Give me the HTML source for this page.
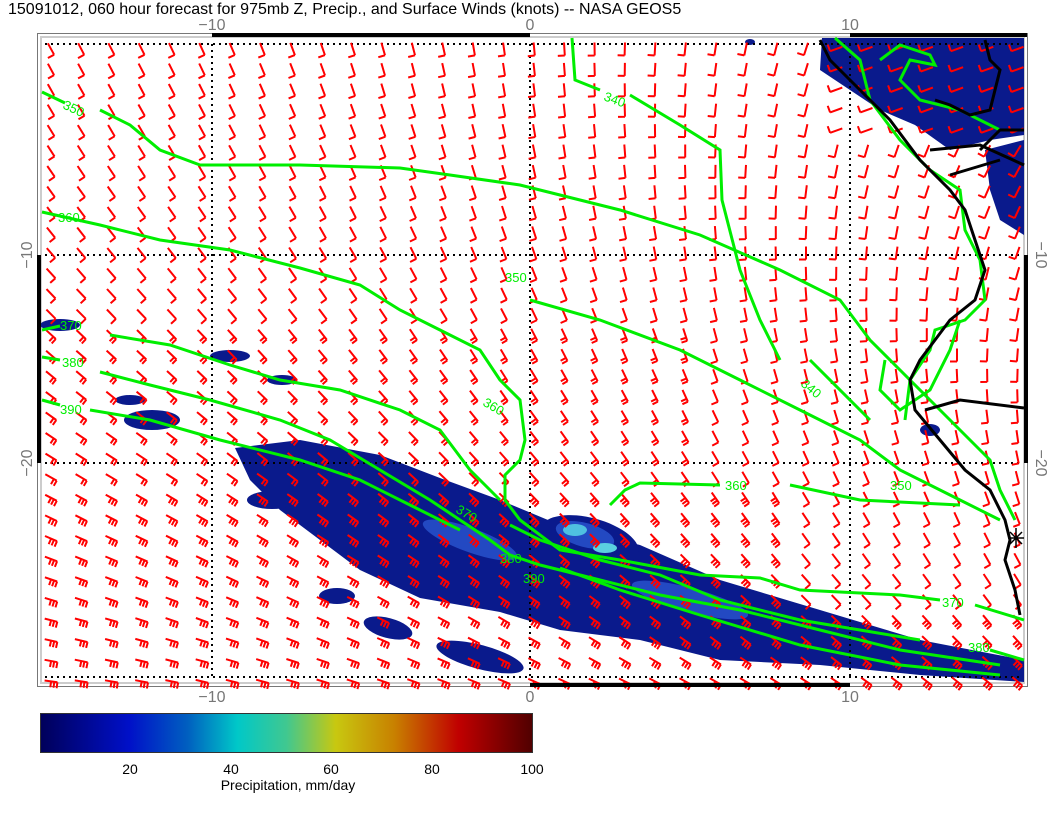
<!DOCTYPE html>
<html><head><meta charset="utf-8"><style>
html,body{margin:0;padding:0;background:#fff;width:1056px;height:816px;overflow:hidden}
svg{display:block}
text{font-family:"Liberation Sans",sans-serif}
</style></head><body>
<svg id="s" width="1056" height="816" viewBox="0 0 1056 816" xmlns="http://www.w3.org/2000/svg">
<text x="8" y="14" font-size="16" fill="#000">15091012, 060 hour forecast for 975mb Z, Precip., and Surface Winds (knots) -- NASA GEOS5</text>
<rect x="37.5" y="33.5" width="990" height="653" fill="#fff" stroke="#777" stroke-width="1"/>
<rect x="41" y="37" width="983" height="646" fill="none" stroke="#ccc" stroke-width="2"/>
<g fill="#0a1a8c">
<path d="M822 38 L1024 38 L1024 135 L990 140 L950 150 L915 125 L880 110 L850 90 L820 70 Z"/>
<path d="M985 150 L1024 140 L1024 235 L1000 220 L990 190 Z"/>
<path d="M235 448 L300 440 L380 455 L440 478 L500 500 L560 525 L640 545 L720 580 L820 610 L920 640 L1024 660 L1024 682 L920 675 L820 665 L720 660 L640 640 L560 630 L500 612 L420 598 L360 570 L320 540 L280 510 L250 480 Z"/>
<ellipse cx="590" cy="540" rx="50" ry="22" transform="rotate(15 590 540)"/>
<ellipse cx="480" cy="657" rx="45" ry="12" transform="rotate(15 480 657)"/>
<ellipse cx="388" cy="628" rx="25" ry="10" transform="rotate(15 388 628)"/>
<ellipse cx="337" cy="596" rx="18" ry="8"/>
<ellipse cx="272" cy="500" rx="25" ry="9"/>
<ellipse cx="230" cy="356" rx="20" ry="6"/>
<ellipse cx="282" cy="380" rx="15" ry="5"/>
<ellipse cx="152" cy="420" rx="28" ry="10"/>
<ellipse cx="130" cy="400" rx="15" ry="5"/>
<ellipse cx="60" cy="325" rx="20" ry="6"/>
<ellipse cx="750" cy="42" rx="5" ry="3"/>
<ellipse cx="930" cy="430" rx="10" ry="6"/>
</g>
<g fill="#2a55d0" opacity=".8">
<ellipse cx="585" cy="535" rx="30" ry="12" transform="rotate(15 585 535)"/>
<ellipse cx="690" cy="600" rx="60" ry="12" transform="rotate(15 690 600)"/>
<ellipse cx="470" cy="540" rx="50" ry="12" transform="rotate(20 470 540)"/>
</g>
<ellipse cx="575" cy="530" rx="12" ry="6" fill="#4fc0e0"/>
<ellipse cx="605" cy="548" rx="12" ry="5" fill="#5ad0e0"/>
<g stroke="#000" stroke-width="2" stroke-dasharray="2 4" fill="none">
<line x1="212" y1="44" x2="212" y2="677"/><line x1="530" y1="44" x2="530" y2="677"/><line x1="850" y1="44" x2="850" y2="677"/>
<line x1="45" y1="44" x2="1020" y2="44"/><line x1="45" y1="255" x2="1020" y2="255"/><line x1="45" y1="463" x2="1020" y2="463"/><line x1="45" y1="677" x2="1020" y2="677"/>
</g>
<g id="barbs" stroke="#f00" stroke-width="2" fill="none" stroke-linecap="butt"></g>
<g stroke="#0e0" stroke-width="3" fill="none">
<path d="M42 92 L65 103 M100 110 L130 125 L160 150 L200 165 L300 165 L400 168 L450 175 L520 185 L580 200 L620 210 L700 235 L780 270 L840 300 L870 340 L900 370 L930 400 L990 460 L1000 490 L1015 520"/>
<path d="M42 212 L100 225 L160 240 L230 250 L300 268 L360 285 L400 310 L440 330 L480 350 L500 380 L520 400 L525 440 L520 460 L505 475 L505 500 L520 520 L560 550 L620 560 L700 575 L760 578 L800 590 L900 595 L940 600 M975 605 L1024 620"/>
<path d="M42 330 L60 326 M110 335 L170 345 L230 365 L280 380 L340 390 L400 410 L440 430 L470 470 L500 500 M510 525 L540 540 L600 560 L660 575 L720 600 L800 620 L860 630 L920 640 M990 650 L1024 660"/>
<path d="M42 357 L60 360 M100 372 L150 385 L210 400 L280 420 L330 440 L380 470 L430 500 L460 520 L490 540 L510 555 L540 565 L600 580 L660 595 L740 610 L820 630 L900 650 L1000 665"/>
<path d="M42 400 L60 405 M90 410 L150 420 L220 440 L300 460 L360 480 L410 505 L460 530 M560 568 L620 590 L700 615 L800 645 L900 665 L1000 675"/>
<path d="M530 300 L600 320 L680 350 L740 380 L800 410 L860 440 L900 470 L960 500 L1000 520 M810 360 L870 420"/>
<path d="M572 38 L575 80 L600 90 M630 95 L680 125 L720 150 L722 200 L740 270 L760 320 L780 360"/>
<path d="M610 505 L625 490 L640 483 L720 485 M790 485 L860 500 L960 505"/>
<path d="M835 38 L860 60 L870 100 L900 140 L930 170 L960 190 L965 230 L980 260 L985 300 L965 320 L935 330 L930 350 L910 380 L905 420"/>
<path d="M880 60 L900 45 L930 55 L935 65 L910 60 L900 80 L920 100 L960 110 L1000 130"/>
<path d="M885 360 L880 390 L900 410 L930 390 L950 350 L960 320"/>
</g>
<g fill="#0e0" font-size="13">
<text x="62" y="108" transform="rotate(25 62 108)">350</text>
<text x="58" y="222">360</text>
<text x="60" y="330">370</text>
<text x="62" y="367">380</text>
<text x="60" y="414">390</text>
<text x="505" y="282">350</text>
<text x="482" y="405" transform="rotate(30 482 405)">360</text>
<text x="800" y="385" transform="rotate(40 800 385)">340</text>
<text x="603" y="100" transform="rotate(20 603 100)">340</text>
<text x="725" y="490">360</text>
<text x="890" y="490">350</text>
<text x="942" y="607">370</text>
<text x="968" y="652">380</text>
<text x="455" y="512" transform="rotate(30 455 512)">370</text>
<text x="500" y="563">380</text>
<text x="523" y="583">390</text>
</g>
<g stroke="#000" stroke-width="3" fill="none">
<path d="M820 40 L830 60 L860 90 L890 120 L920 160 L950 190 L965 210 L975 240 L985 270 L975 300 L950 320 L935 340 L920 360 L910 380 L915 410 L940 440 L965 470 L990 490 L1005 520 L1010 540 L1005 560 L1015 590 L1020 615"/>
<path d="M930 150 L980 145 L1024 165 M950 175 L1000 160 M925 410 L960 400 L1024 408 M980 150 L1000 130 L1024 130"/>
<path d="M985 40 L990 60 L1000 70 L995 90 L990 110 L970 115 L950 105 L935 100"/>
</g>
<g stroke="#000" stroke-width="1.5"><path d="M1008 538 L1024 538 M1016 528 L1016 548 M1010 532 L1022 544 M1022 532 L1010 544"/></g>
<g fill="#000">
<rect x="212" y="33" width="318" height="4"/><rect x="850" y="33" width="177" height="4"/>
<rect x="530" y="683" width="320" height="4"/>
<rect x="37" y="255" width="4" height="208"/><rect x="1024" y="255" width="4" height="208"/>
</g>
<g fill="#777" font-size="16" text-anchor="middle">
<text x="212" y="30">−10</text><text x="530" y="30">0</text><text x="850" y="30">10</text>
<text x="212" y="702">−10</text><text x="530" y="702">0</text><text x="850" y="702">10</text>
<text transform="translate(32 255) rotate(-90)">−10</text><text transform="translate(32 463) rotate(-90)">−20</text>
<text transform="translate(1036 255) rotate(90)">−10</text><text transform="translate(1036 463) rotate(90)">−20</text>
</g>
<defs><linearGradient id="cb" x1="0" x2="1">
<stop offset="0" stop-color="#00005a"/><stop offset=".18" stop-color="#0010c8"/><stop offset=".3" stop-color="#0060c0"/><stop offset=".4" stop-color="#00c8c8"/><stop offset=".5" stop-color="#40c890"/><stop offset=".6" stop-color="#c8c810"/><stop offset=".72" stop-color="#c88000"/><stop offset=".85" stop-color="#c00000"/><stop offset="1" stop-color="#500000"/>
</linearGradient></defs>
<rect x="40.5" y="713.5" width="492" height="39" fill="url(#cb)" stroke="#333"/>
<g fill="#000" font-size="14" text-anchor="middle">
<text x="130" y="774">20</text><text x="231" y="774">40</text><text x="331" y="774">60</text><text x="432" y="774">80</text><text x="532" y="774">100</text>
<text x="288" y="790">Precipitation, mm/day</text>
</g>
</svg>
<script>
(function(){
var g=document.getElementById('barbs'),out='';
function lerp(a,b,t){return a+(b-a)*t}
for(var j=0;j<32;j++){for(var i=0;i<33;i++){
var x=51+i*30.2,y=49+j*20.4;
var u=(x-51)/970,v=(y-49)/632;
var angTop=lerp(62,130,Math.pow(u,1.6)),angBot=lerp(8,40,u);
var ang=lerp(angTop,angBot,Math.pow(v,1.3));
if(x>820&&y<140)ang=160;
var a=ang*Math.PI/180,dx=Math.cos(a),dy=Math.sin(a);
var n=y<330?1:(y<480?2:3); if(x>800&&y<600)n=1; if(x>700&&y<480)n=1;
var L=13,hx=x-dx*L/2,hy=y-dy*L/2,tx=x+dx*L/2,ty=y+dy*L/2;
var d='M'+hx.toFixed(1)+' '+hy.toFixed(1)+'L'+tx.toFixed(1)+' '+ty.toFixed(1);
var fx=-dy,fy=dx,fl=n==1?7:6;
for(var k=0;k<n;k++){var bx=tx-dx*k*3.2,by=ty-dy*k*3.2;
d+='M'+bx.toFixed(1)+' '+by.toFixed(1)+'l'+(fx*fl).toFixed(1)+' '+(fy*fl).toFixed(1);}
out+='<path d="'+d+'"/>';
}}
g.innerHTML=out;
})();
</script>
</body></html>
